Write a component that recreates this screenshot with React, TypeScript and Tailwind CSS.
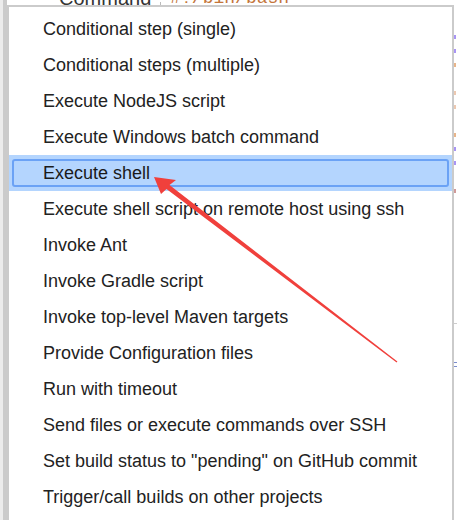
const items = [
  "Conditional step (single)",
  "Conditional steps (multiple)",
  "Execute NodeJS script",
  "Execute Windows batch command",
  "Execute shell",
  "Execute shell script on remote host using ssh",
  "Invoke Ant",
  "Invoke Gradle script",
  "Invoke top-level Maven targets",
  "Provide Configuration files",
  "Run with timeout",
  "Send files or execute commands over SSH",
  'Set build status to "pending" on GitHub commit',
  "Trigger/call builds on other projects",
];

// tiny editor glyphs peeking out at the right edge
const marks = [
  "bg-[#a894f4]",
  "bg-[#a894f4]",
  "bg-[#e8b58a]",
  "bg-transparent",
  "bg-[#ecc8b0]",
  "bg-[#ecc8b0]",
  "bg-transparent",
  "bg-[#e8b58a]",
  "bg-[#a894f4]",
  "bg-[#a894f4]",
  "bg-transparent",
  "bg-[#d09a9a]",
];

export default function App() {
  return (
    <div
      className="relative h-[520px] w-[457px] overflow-hidden bg-[#f4f4f4]"
      style={{ fontFamily: '"Liberation Sans", Arial, sans-serif' }}
    >
      {/* page behind the menu */}
      <div className="flex h-full">
        <div className="w-[3px] bg-[#ececec]" />
        <div className="w-[4px] bg-[#cbcbcb]" />
        <div className="flex flex-1 flex-col bg-white">
          <div className="-mt-[14px] flex items-end gap-[9px] pl-[52px]">
            <span className="text-[20px] leading-[24px] text-[#333]">Command</span>
            <span className="mb-[-6px] h-[14px] w-px bg-[#bbb]" />
            <span className="text-[18px] leading-[24px] text-[#c4753a]" style={{ fontFamily: '"Liberation Mono", monospace' }}>
              #!/bin/bash
            </span>
          </div>
          <div className="flex flex-col items-end gap-[10px] pr-[1px] pt-[25px]">
            {marks.map((c, i) => (
              <span key={i} className={`h-[4px] w-[2px] ${c}`} />
            ))}
          </div>
          <div className="mt-[130px] h-px w-[5px] self-end bg-[#ccc]" />
          <div className="mt-[38px] h-[5px] w-[3px] self-end border-y border-[#7a8ccc]" />
        </div>
      </div>

      {/* dropdown menu */}
      <div className="absolute left-[7px] top-[5px] w-[447px] border-2 border-[#cbcbcb] bg-white pb-[5px] pt-[4px]">
        {items.map((label) => {
          const active = label === "Execute shell";
          return (
            <div key={label} className={active ? "bg-[#b4d5fe] px-[3px] py-[4px]" : ""}>
              <div
                className={
                  active
                    ? "flex h-[28px] items-center rounded-[3px] border-2 border-[#6ba2f5] pl-[29px] text-[18px] text-[#1a1a1a]"
                    : "flex h-[36px] items-center pl-[34px] text-[18px] text-[#222]"
                }
              >
                {label}
              </div>
            </div>
          );
        })}
      </div>

      {/* annotation arrow */}
      <svg className="pointer-events-none absolute left-0 top-0" width="457" height="520" viewBox="0 0 457 520">
        <polygon
          points="154,177 176,180 169.5,185 397.4,361.5 396.6,362.5 166.5,189 161,194"
          fill="#f0403c"
        />
      </svg>
    </div>
  );
}
